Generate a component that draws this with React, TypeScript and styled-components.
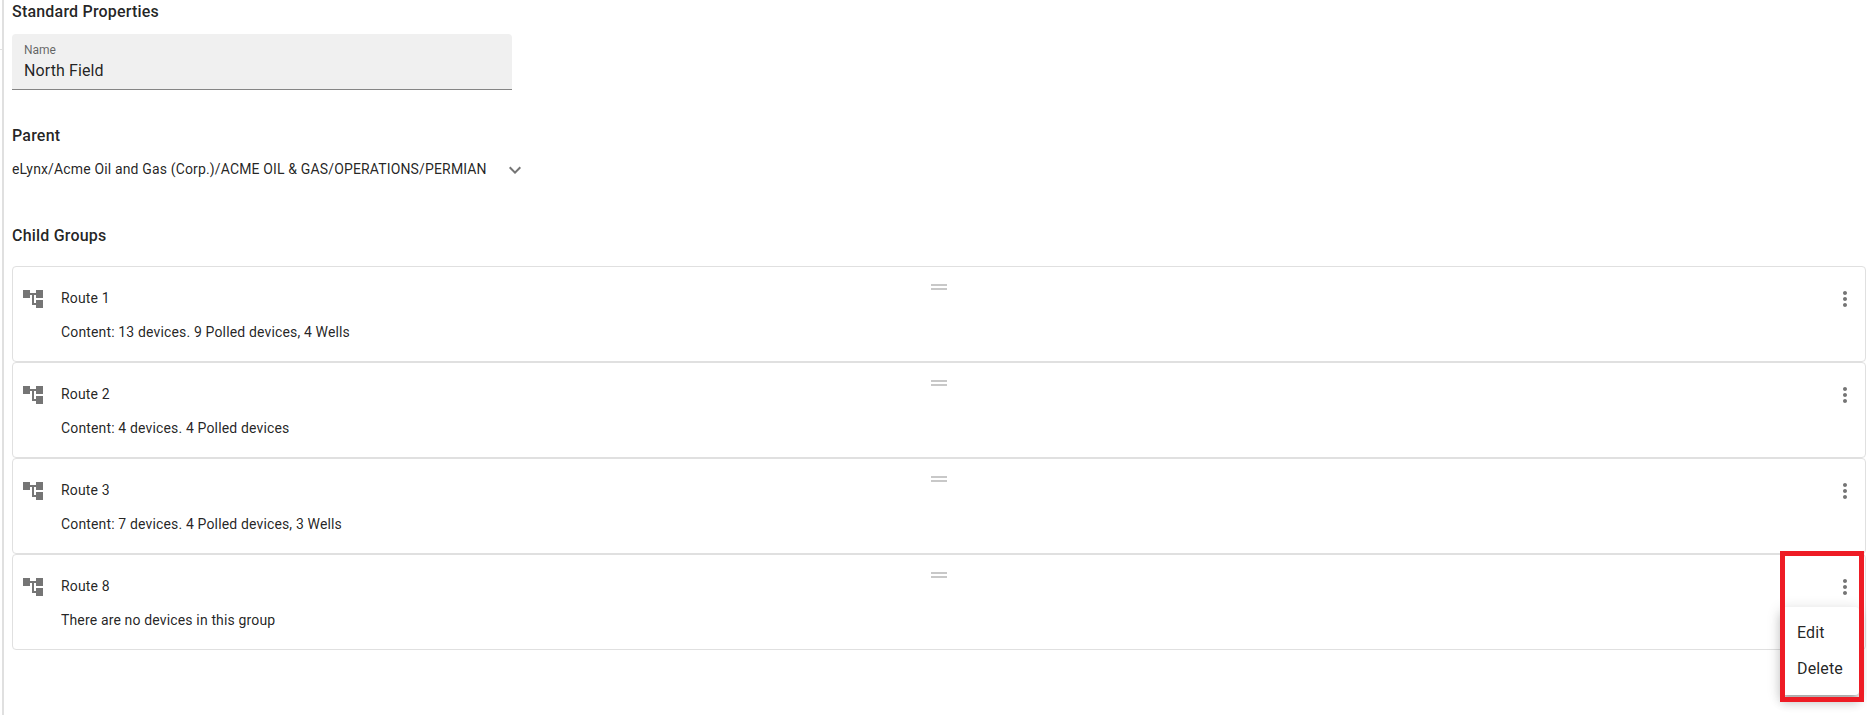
import React from 'react';
import styled, { createGlobalStyle } from 'styled-components';

const GlobalStyle = createGlobalStyle`
  *, *::before, *::after { box-sizing: border-box; }
  body {
    margin: 0;
    background: #fff;
    color: rgba(0, 0, 0, 0.87);
    font-family: Roboto, sans-serif;
    overflow: hidden;
  }
`;

const Page = styled.div`
  display: flex;
  height: 715px;
`;

const Splitter = styled.div`
  flex: none;
  width: 4px;
  border-right: 2px solid #e0e0e0;
  padding-top: 49px;

  &::before {
    content: '';
    display: block;
    height: 1px;
    background: #e0e0e0;
  }
`;

const Content = styled.main`
  flex: 1;
  display: flex;
  flex-direction: column;
  padding: 0 1px 0 8px;
`;

const Heading = styled.h3<{ $top?: number }>`
  margin: ${({ $top = 0 }) => $top}px 0 0;
  font-size: 16px;
  font-weight: 500;
  line-height: 24px;
  letter-spacing: 0.2px;
`;

const Field = styled.label`
  display: flex;
  flex-direction: column;
  gap: 1px;
  width: 500px;
  height: 56px;
  margin-top: 10px;
  padding: 8px 12px 0;
  background: #f0f0f0;
  border-bottom: 1px solid #858585;
  border-radius: 4px 4px 0 0;
`;

const FieldLabel = styled.span`
  font-size: 12px;
  line-height: 16px;
  color: rgba(0, 0, 0, 0.6);
`;

const FieldValue = styled.span`
  font-size: 16px;
  line-height: 24px;
  letter-spacing: 0.1px;
`;

const ParentPath = styled.div`
  display: flex;
  align-items: center;
  height: 24px;
  margin-top: 10px;
  gap: 16px;
  font-size: 14px;
  letter-spacing: 0.15px;
`;

const PathText = styled.span`
  width: 475px;
  padding-bottom: 2px;
  white-space: nowrap;
`;

const Groups = styled.div`
  display: flex;
  flex-direction: column;
  margin-top: 18px;
`;

const Card = styled.article`
  position: relative;
  display: flex;
  align-items: flex-start;
  height: 96px;
  padding: 20px 8px 0;
  border: 1px solid #e0e0e0;
  border-radius: 4px;
`;

const CardText = styled.div`
  flex: 1;
  display: flex;
  flex-direction: column;
  gap: 14px;
  padding: 1px 0 0 16px;
  font-size: 14px;
  line-height: 20px;
  letter-spacing: 0.15px;
`;

const Icon = styled.svg`
  flex: none;
  display: block;
  width: 24px;
  height: 24px;
  fill: #757575;
`;

const Handle = styled(Icon)`
  position: absolute;
  top: 8px;
  left: 914px;
  fill: #c8c8c8;
`;

const Highlight = styled.div`
  position: absolute;
  left: 1780px;
  top: 551px;
  width: 84px;
  height: 151px;
  border: 5px solid #ee1c25;
`;

const Menu = styled.div`
  position: absolute;
  left: 1781px;
  top: 607px;
  width: 78px;
  height: 88px;
  padding: 8px 0 8px 16px;
  display: flex;
  flex-direction: column;
  background: #fff;
  border-radius: 4px;
  box-shadow: 0 5px 5px -3px rgba(0, 0, 0, 0.2), 0 8px 10px 1px rgba(0, 0, 0, 0.14),
    0 3px 14px 2px rgba(0, 0, 0, 0.12);
`;

const MenuItem = styled.span`
  font-size: 16px;
  line-height: 36px;
  letter-spacing: 0.15px;
`;

const groups = [
  { name: 'Route 1', content: 'Content: 13 devices. 9 Polled devices, 4 Wells' },
  { name: 'Route 2', content: 'Content: 4 devices. 4 Polled devices' },
  { name: 'Route 3', content: 'Content: 7 devices. 4 Polled devices, 3 Wells' },
  { name: 'Route 8', content: 'There are no devices in this group' },
];

export default function App() {
  return (
    <>
      <GlobalStyle />
      <Page>
        <Splitter />
        <Content>
          <Heading>Standard Properties</Heading>
          <Field>
            <FieldLabel>Name</FieldLabel>
            <FieldValue>North Field</FieldValue>
          </Field>
          <Heading $top={34}>Parent</Heading>
          <ParentPath>
            <PathText>eLynx/Acme Oil and Gas (Corp.)/ACME OIL &amp; GAS/OPERATIONS/PERMIAN</PathText>
            <Icon viewBox="0 0 24 24">
              <path d="M16.59 8.59 12 13.17 7.41 8.59 6 10l6 6 6-6z" />
            </Icon>
          </ParentPath>
          <Heading $top={42}>Child Groups</Heading>
          <Groups>
            {groups.map((g) => (
              <Card key={g.name}>
                <Icon viewBox="0 0 24 24">
                  <path d="M22 11V3h-7v3H9V3H2v8h7V8h2v10h4v3h7v-8h-7v3h-2V8h2v3z" />
                </Icon>
                <CardText>
                  <span>{g.name}</span>
                  <span>{g.content}</span>
                </CardText>
                <Handle viewBox="0 0 24 24">
                  <path d="M20 9H4v2h16V9zM4 15h16v-2H4v2z" />
                </Handle>
                <Icon viewBox="0 0 24 24">
                  <path d="M12 8c1.1 0 2-.9 2-2s-.9-2-2-2-2 .9-2 2 .9 2 2 2zm0 2c-1.1 0-2 .9-2 2s.9 2 2 2 2-.9 2-2-.9-2-2-2zm0 6c-1.1 0-2 .9-2 2s.9 2 2 2 2-.9 2-2-.9-2-2-2z" />
                </Icon>
              </Card>
            ))}
          </Groups>
        </Content>
      </Page>
      <Menu>
        <MenuItem>Edit</MenuItem>
        <MenuItem>Delete</MenuItem>
      </Menu>
      <Highlight />
    </>
  );
}
